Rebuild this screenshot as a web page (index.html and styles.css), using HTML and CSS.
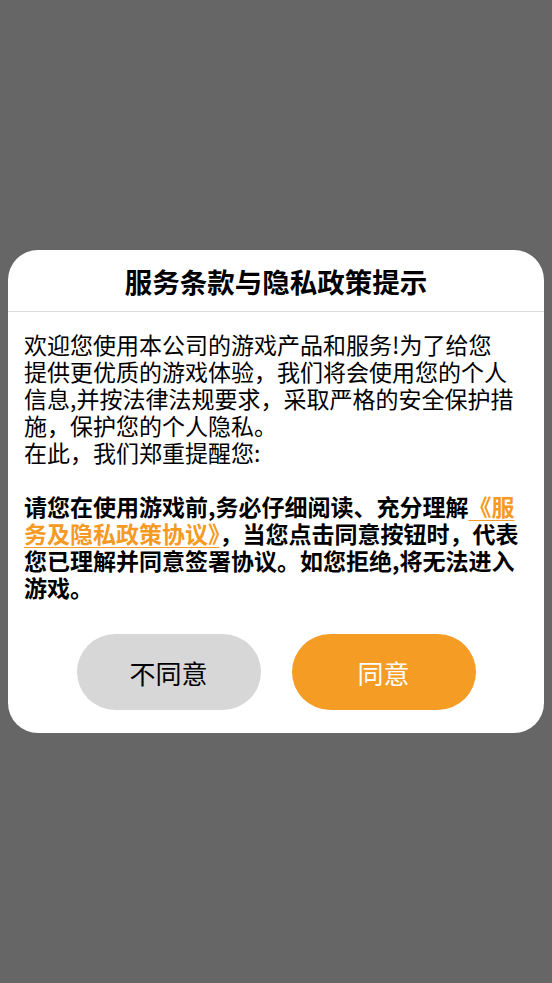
FILE: index.html
```html
<!DOCTYPE html>
<html lang="zh-CN">
<head>
<meta charset="utf-8">
<title>服务条款与隐私政策提示</title>
<link rel="stylesheet" href="styles.css">
</head>
<body>
<div class="screen">
  <div class="dialog">
    <div class="dialog-header">服务条款与隐私政策提示</div>
    <div class="dialog-body">
      <p class="intro">欢迎您使用本公司的游戏产品和服务!为了给您<br>提供更优质的游戏体验，我们将会使用您的个人<br>信息,并按法律法规要求，采取严格的安全保护措<br>施，保护您的个人隐私。<br>在此，我们郑重提醒您:</p>
      <p class="notice">请您在使用游戏前,务必仔细阅读、充分理解<a class="link" href="#">《服<br>务及隐私政策协议》</a>，当您点击同意按钮时，代表<br>您已理解并同意签署协议。如您拒绝,将无法进入<br>游戏。</p>
    </div>
    <div class="dialog-actions">
      <button class="btn btn-decline">不同意</button>
      <button class="btn btn-accept">同意</button>
    </div>
  </div>
</div>
</body>
</html>
```

FILE: styles.css
```css
* { box-sizing: border-box; }
html, body {
  margin: 0;
  padding: 0;
  height: 100%;
}
body {
  background: #666666;
  font-family: "Noto Sans CJK SC", "Noto Sans", sans-serif;
  color: #000;
}
.screen {
  height: 983px;
  display: flex;
  align-items: center;
  justify-content: center;
  padding: 0 8px;
}
.dialog {
  width: 536px;
  background: #ffffff;
  border-radius: 30px;
  overflow: hidden;
}
.dialog-header {
  height: 62px;
  display: flex;
  align-items: center;
  justify-content: center;
  font-size: 27.5px;
  font-weight: bold;
  border-bottom: 1px solid #dcdcdc;
}
.dialog-body {
  padding: 19px 8px 0 16px;
  font-size: 23px;
  line-height: 27px;
  white-space: nowrap;
}
.dialog-body p {
  margin: 0;
}
.intro {
  margin-bottom: 27px !important;
}
.notice {
  font-weight: bold;
}
.link {
  color: #f59a23;
  text-decoration: underline;
  text-decoration-thickness: 1px;
  text-underline-offset: 4px;
}
.dialog-actions {
  display: flex;
  justify-content: center;
  gap: 31px;
  padding: 33px 0 23px;
}
.btn {
  width: 184px;
  height: 76px;
  border: none;
  border-radius: 38px;
  font-family: "Noto Sans CJK SC", "Noto Sans", sans-serif;
  font-size: 26px;
}
.btn-decline {
  background: #d7d7d7;
  color: #000;
}
.btn-accept {
  background: #f59c25;
  color: #fff;
}
```
